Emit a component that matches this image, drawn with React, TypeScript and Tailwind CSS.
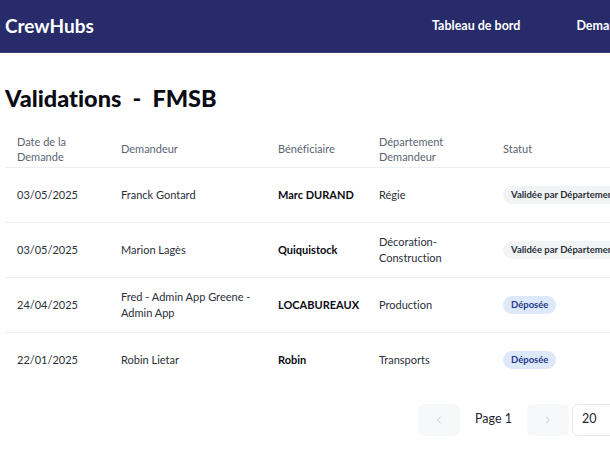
const rows = [
  { date: "03/05/2025", dem: "Franck Gontard", ben: "Marc DURAND", dep: "Régie", statut: "Validée par Département", kind: "gray" },
  { date: "03/05/2025", dem: "Marion Lagès", ben: "Quiquistock", dep: "Décoration-Construction", statut: "Validée par Département", kind: "gray" },
  { date: "24/04/2025", dem: "Fred - Admin App Greene - Admin App", ben: "LOCABUREAUX", dep: "Production", statut: "Déposée", kind: "blue" },
  { date: "22/01/2025", dem: "Robin Lietar", ben: "Robin", dep: "Transports", statut: "Déposée", kind: "blue" },
];

export default function App() {
  return (
    <div className="w-[610px] h-[456px] overflow-hidden bg-white font-['Lato',sans-serif] [font-variant-ligatures:none] text-[#111827]">
      <header className="h-[53px] w-[760px] bg-[#272b6a] border-b border-[#3b3f7a] flex items-center px-[5px]">
        <div className="w-[427px] text-white font-bold text-[19px]">CrewHubs</div>
        <nav className="flex items-center gap-[56px] text-white text-[12.5px] font-bold">
          <span>Tableau de bord</span>
          <span>Demandes</span>
        </nav>
      </header>

      <main className="w-[760px] px-[5px] pt-[34px]">
        <h1 className="text-[23.5px] font-black leading-none text-[#0b0b14]">Validations&nbsp; - &nbsp;FMSB</h1>

        <table className="mt-[20px] w-[646px] table-fixed border-collapse text-[11px]">
          <colgroup>
            <col className="w-[104px]" />
            <col className="w-[157px]" />
            <col className="w-[101px]" />
            <col className="w-[124px]" />
            <col className="w-[160px]" />
          </colgroup>
          <thead>
            <tr className="border-b border-[#eeeff2] text-left text-[#5b6472]">
              <th className="font-normal px-3 h-[37px] leading-[15px]">Date de la Demande</th>
              <th className="font-normal px-3">Demandeur</th>
              <th className="font-normal px-3">Bénéficiaire</th>
              <th className="font-normal px-3 leading-[15px]">Département Demandeur</th>
              <th className="font-normal px-3">Statut</th>
            </tr>
          </thead>
          <tbody>
            {rows.map((r, i) => (
              <tr key={i} className={i < rows.length - 1 ? "border-b border-[#eeeff2]" : ""}>
                <td className="px-3 h-[55px] text-[#2a2f38]">{r.date}</td>
                <td className="px-3 text-[#2a2f38] leading-[16px]">{r.dem}</td>
                <td className="px-3 font-bold text-[#0b0b14]">{r.ben}</td>
                <td className="px-3 text-[#2a2f38] leading-[16px]">{r.dep}</td>
                <td className="px-3">
                  <span
                    className={
                      r.kind === "gray"
                        ? "inline-block whitespace-nowrap rounded-full bg-[#f2f3f5] px-2 py-[2px] text-[9.5px] font-bold text-[#2a2f38]"
                        : "inline-block whitespace-nowrap rounded-full bg-[#dde8fb] px-2 py-[2px] text-[9.5px] font-bold text-[#1e3a8a]"
                    }
                  >
                    {r.statut}
                  </span>
                </td>
              </tr>
            ))}
          </tbody>
        </table>

        <div className="mt-[16px] w-[605px] flex justify-end items-center">
          <button className="w-[42px] h-[32px] rounded-md bg-[#f7f8fa] flex items-center justify-center text-[#c5c9d0]">
            <svg width="12" height="12" viewBox="0 0 24 24" fill="none" stroke="currentColor" strokeWidth="2" strokeLinecap="round" strokeLinejoin="round"><path d="M15 18l-6-6 6-6" /></svg>
          </button>
          <span className="px-[15px] text-[12.5px] text-[#1f2430]">Page 1</span>
          <button className="w-[42px] h-[32px] rounded-md bg-[#f7f8fa] flex items-center justify-center text-[#c5c9d0]">
            <svg width="12" height="12" viewBox="0 0 24 24" fill="none" stroke="currentColor" strokeWidth="2" strokeLinecap="round" strokeLinejoin="round"><path d="M9 18l6-6-6-6" /></svg>
          </button>
          <div className="ml-[3px] mr-[-40px] w-[78px] h-[32px] rounded-md border border-[#e5e7eb] flex items-center pl-[9px] text-[12.5px] text-[#1f2430]">20</div>
        </div>
      </main>
    </div>
  );
}
